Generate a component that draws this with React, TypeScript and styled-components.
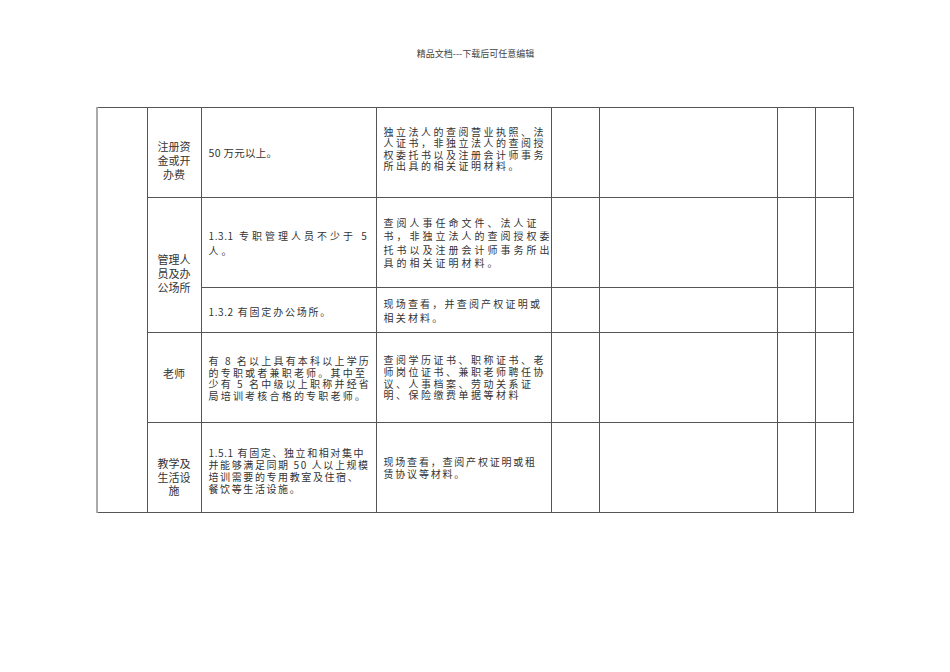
import React from "react";
import styled, { createGlobalStyle } from "styled-components";

const GlobalStyle = createGlobalStyle`
  html, body {
    margin: 0;
    padding: 0;
    background: #ffffff;
  }
  body {
    font-family: "Noto Sans CJK SC", "Liberation Serif", serif;
    color: #333;
  }
`;

const Page = styled.div`
  width: 950px;
  height: 672px;
  padding-top: 48px;
  box-sizing: border-box;
`;

const Header = styled.div`
  text-align: center;
  font-size: 9px;
  line-height: 12px;
  color: #444;
  margin-bottom: 47px;
  padding-left: 1px;
`;

const Table = styled.table`
  margin-left: 96px;
  width: 757px;
  border-collapse: collapse;
  table-layout: fixed;
`;

const Row = styled.tr<{ $h: number }>`
  height: ${(p) => p.$h}px;
`;

const Cell = styled.td<{
  $center?: boolean;
  $size?: number;
  $lh?: number;
  $ls?: number;
  $pt?: number;
  $pb?: number;
}>`
  border: 1px solid #555;
  padding: ${(p) => p.$pt ?? 0}px 2px ${(p) => p.$pb ?? 0}px
    ${(p) => (p.$center ? 2 : 7)}px;
  vertical-align: middle;
  text-align: ${(p) => (p.$center ? "center" : "left")};
  font-size: ${(p) => p.$size ?? 10}px;
  line-height: ${(p) => p.$lh ?? 11.5}px;
  letter-spacing: ${(p) => p.$ls ?? 0}px;
  color: #333;
  white-space: nowrap;
  overflow: hidden;
`;

const Num = styled.span`
  letter-spacing: 0.6px;
`;

const Blank = styled.td<{ $light?: boolean }>`
  border: 1px solid #555;
  border-left-color: ${(p) => (p.$light ? "#999" : "#555")};
`;

const Side = styled.td`
  border: 1px solid #555;
  border-left: 2px solid #aaa;
`;

const Line = styled.div``;

const lines = (arr: React.ReactNode[]) =>
  arr.map((t, i) => <Line key={i}>{t}</Line>);

const Tail = () => (
  <>
    <Blank />
    <Blank />
    <Blank $light />
    <Blank />
  </>
);

export default function App() {
  return (
    <Page>
      <GlobalStyle />
      <Header>精品文档---下载后可任意编辑</Header>
      <Table>
        <colgroup>
          <col style={{ width: 50 }} />
          <col style={{ width: 54 }} />
          <col style={{ width: 175 }} />
          <col style={{ width: 175 }} />
          <col style={{ width: 48 }} />
          <col style={{ width: 178 }} />
          <col style={{ width: 38 }} />
          <col style={{ width: 38 }} />
        </colgroup>
        <tbody>
          <Row $h={90}>
            <Side rowSpan={5} />
            <Cell $center $size={11} $lh={14} $pt={15}>
              {lines(["注册资", "金或开", "办费"])}
            </Cell>
            <Cell $size={10.5} $ls={0.3}>
              50 万元以上。
            </Cell>
            <Cell $ls={2.5} $lh={11.5} $pb={8}>
              {lines([
                "独立法人的查阅营业执照、法",
                "人证书，非独立法人的查阅授",
                "权委托书以及注册会计师事务",
                "所出具的相关证明材料。",
              ])}
            </Cell>
            <Tail />
          </Row>
          <Row $h={90}>
            <Cell $center $size={11} $lh={14} $pt={15} rowSpan={2}>
              {lines(["管理人", "员及办", "公场所"])}
            </Cell>
            <Cell $ls={3} $lh={15}>
              {lines([
                <>
                  <Num>1.3.1</Num> 专职管理人员不少于 5
                </>,
                "人。",
              ])}
            </Cell>
            <Cell $ls={3} $lh={13.3}>
              {lines([
                "查阅人事任命文件、法人证",
                "书，非独立法人的查阅授权委",
                "托书以及注册会计师事务所出",
                "具的相关证明材料。",
              ])}
            </Cell>
            <Tail />
          </Row>
          <Row $h={45}>
            <Cell $ls={1.8} $pt={4}>
              <Num>1.3.2</Num> 有固定办公场所。
            </Cell>
            <Cell $ls={2.2} $lh={14} $pt={1}>
              {lines(["现场查看，并查阅产权证明或", "相关材料。"])}
            </Cell>
            <Tail />
          </Row>
          <Row $h={90}>
            <Cell $center $size={11} $pb={8}>
              老师
            </Cell>
            <Cell $ls={2.2} $lh={11.5} $pt={1}>
              {lines([
                "有\u20098\u2009名以上具有本科以上学历",
                "的专职或者兼职老师。其中至",
                "少有\u20095\u2009名中级以上职称并经省",
                "局培训考核合格的专职老师。",
              ])}
            </Cell>
            <Cell $ls={2.5} $lh={11.7}>
              {lines([
                "查阅学历证书、职称证书、老",
                "师岗位证书、兼职老师聘任协",
                "议、人事档案、劳动关系证",
                "明、保险缴费单据等材料",
              ])}
            </Cell>
            <Tail />
          </Row>
          <Row $h={90}>
            <Cell $center $size={11} $lh={13.5} $pt={20}>
              {lines(["教学及", "生活设", "施"])}
            </Cell>
            <Cell $ls={1.6} $lh={12} $pt={6}>
              {lines([
                <>
                  <Num>1.5.1</Num> 有固定、独立和相对集中
                </>,
                "并能够满足同期 50 人以上规模",
                "培训需要的专用教室及住宿、",
                "餐饮等生活设施。",
              ])}
            </Cell>
            <Cell $ls={1.8} $lh={11.5}>
              {lines(["现场查看，查阅产权证明或租", "赁协议等材料。"])}
            </Cell>
            <Tail />
          </Row>
        </tbody>
      </Table>
    </Page>
  );
}
